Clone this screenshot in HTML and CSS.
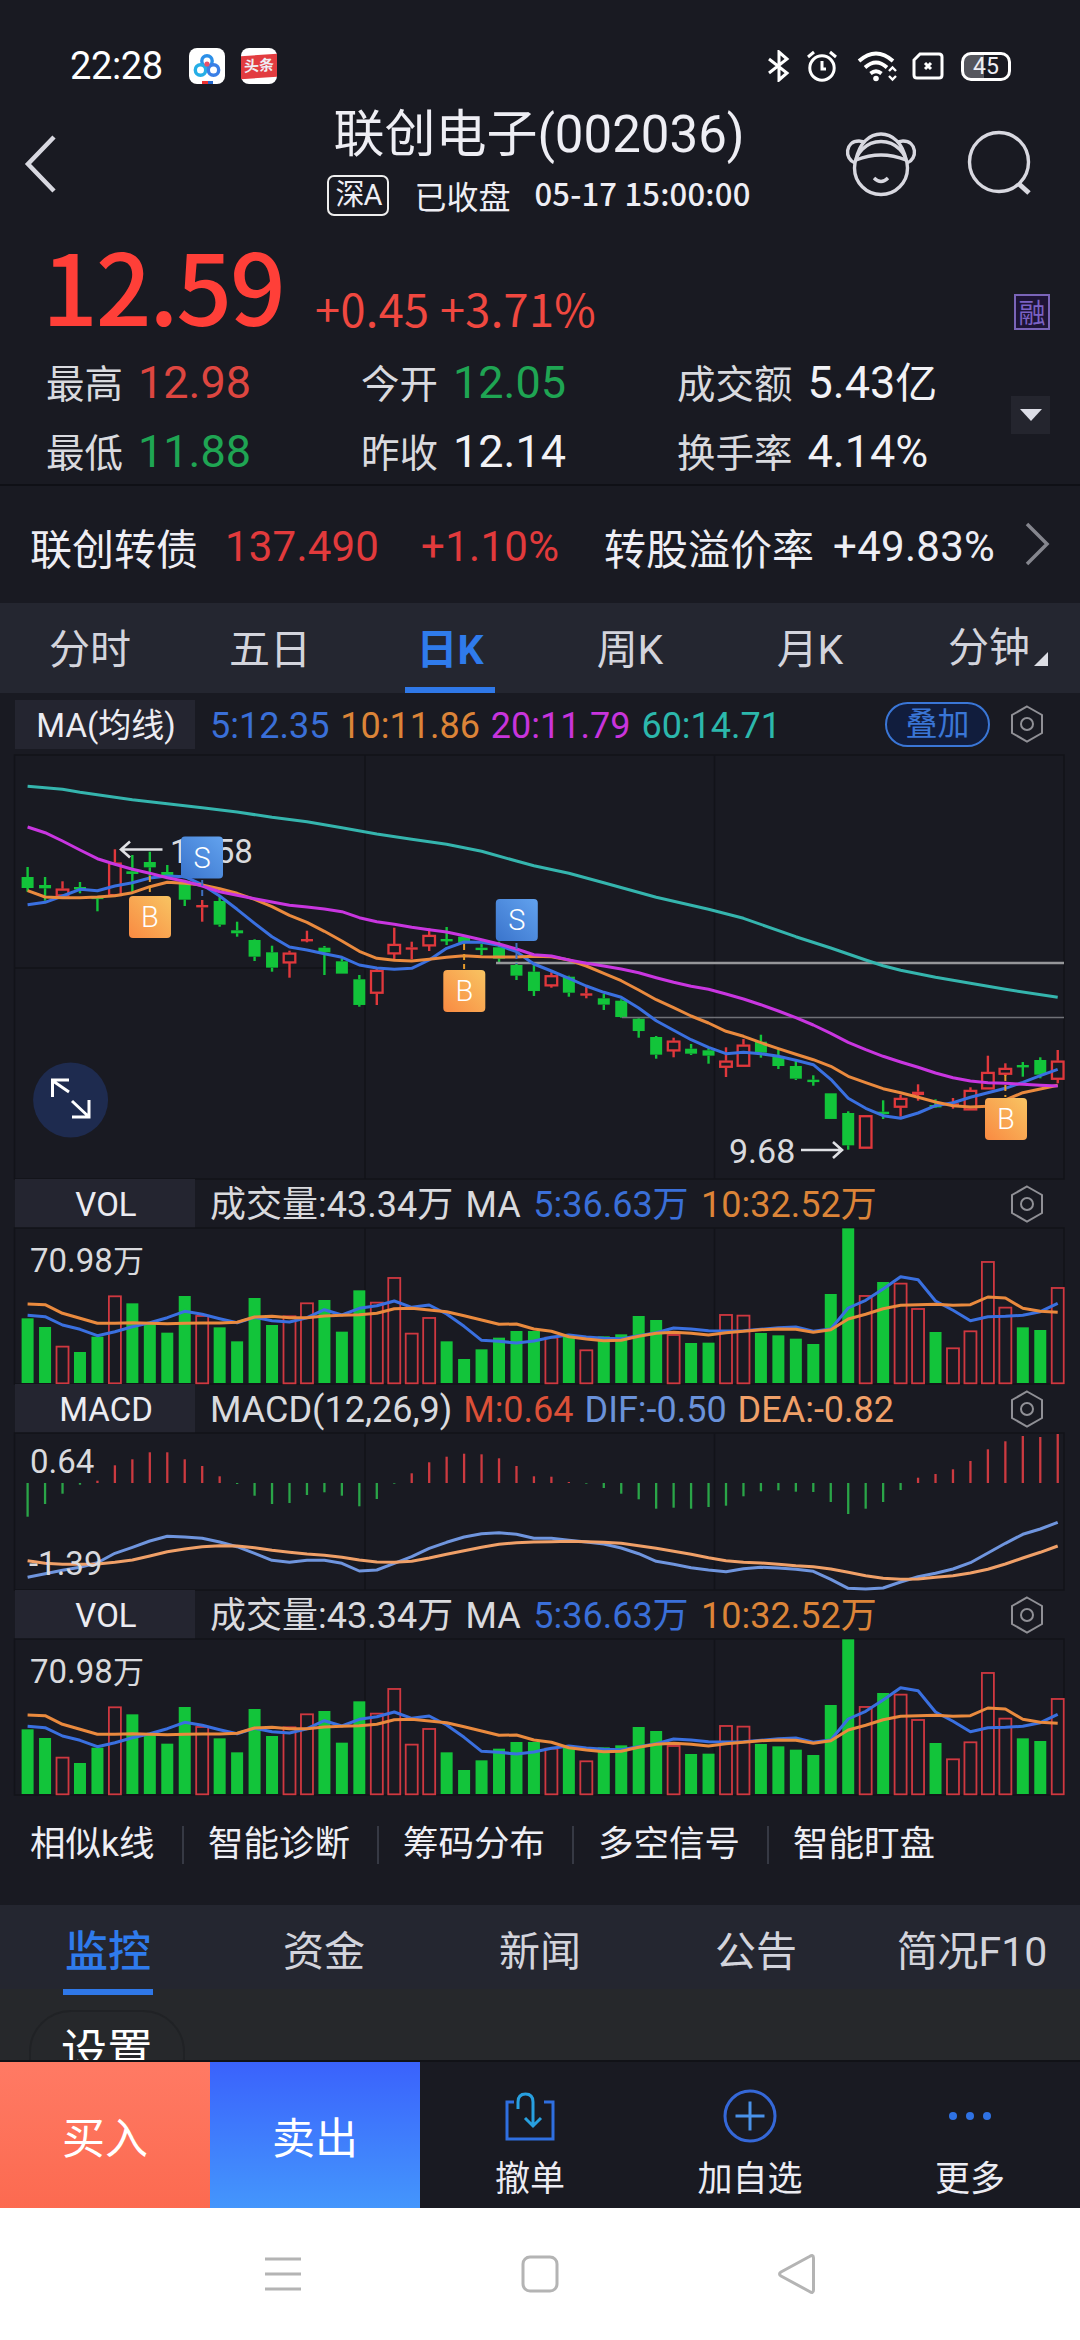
FILE: index.html
```html
<!DOCTYPE html>
<html lang="zh-CN">
<head>
<meta charset="utf-8">
<title>联创电子(002036)</title>
<link rel="stylesheet" href="styles.css">
</head>
<body>
<svg class="defs" width="0" height="0">
  <symbol id="hex" viewBox="0 0 34 38"><path d="M17 1.5 32 10v18L17 36.5 2 28V10Z"/><circle cx="17" cy="19" r="6"/></symbol>
</svg>

<div class="status">
  <span class="clock">22:28</span>
  <svg class="app" viewBox="0 0 36 36"><rect width="36" height="36" rx="8" fill="#fff"/><g fill="none" stroke-width="3.4"><circle cx="18" cy="13" r="5.2" stroke="#2b8fe8"/><circle cx="11.5" cy="22" r="5.2" stroke="#25aee6"/><circle cx="24.5" cy="22" r="5.2" stroke="#3a7fe6"/></g><circle cx="18" cy="16" r="2.6" fill="#e8506a"/><path d="M13 34.5h6" stroke="#e33" stroke-width="3"/><path d="M19 34.5h5" stroke="#26c" stroke-width="3"/></svg>
  <span class="app news"><b>头条</b></span>
  <div class="sys">
    <svg class="bt" width="24" height="32" viewBox="0 0 24 32"><path d="M2 9 20 23 12 30V2l8 7L2 23"/></svg>
    <svg class="alarm" width="32" height="32" viewBox="0 0 32 32"><circle cx="16" cy="18" r="12.2"/><path d="M16 11v8h4M2 7l6-5M30 7l-6-5"/></svg>
    <svg class="wifi" width="42" height="32" viewBox="0 0 42 32"><path d="M3 11q17-15 34 0M9 17.500q11-10 22 0M14.500 23.500q5.500-4.500 11 0" stroke-width="3.800"/><circle cx="20" cy="28.500" r="2.800" fill="#fff" stroke="none"/><path d="m33 21 3.500-3.500L40 21M33 26l3.500 3.500L40 26" stroke-width="2.400"/></svg>
    <svg class="sim" width="32" height="28" viewBox="0 0 32 28"><path d="M8 2h19q3 0 3 3v18q0 3-3 3H5q-3 0-3-3V8ZM13 11l6 6M19 11l-6 6" stroke-width="3"/></svg>
    <span class="battery">45</span>
  </div>
</div>

<header class="head">
  <svg class="back" width="34" height="60" viewBox="0 0 34 60"><path d="M31 3 5 30l26 27"/></svg>
  <div class="names">
    <h1>联创电子(002036)</h1>
    <p><span class="market">深A</span><span class="closed">已收盘</span><span class="when">05-17 15:00:00</span></p>
  </div>
  <svg class="bot" width="72" height="66" viewBox="0 0 72 66"><circle cx="36" cy="37" r="26.500"/><path d="M11 29Q36 19 61 29C58 12 47 3 36 3S14 12 11 29ZM10 32C-1 28 0 10 14 10q4 0 6 2M62 32c11-4 10-22-4-22q-4 0-6 2M29 47q7 7 14 0"/></svg>
  <svg class="search" width="66" height="66" viewBox="0 0 66 66"><circle cx="32" cy="32" r="29.500"/><path d="m52 54 10 9" stroke-width="5"/></svg>
</header>

<section class="quote">
  <div class="last"><strong>12.59</strong><span>+0.45 +3.71%</span><i class="margin">融</i></div>
  <div class="stats">
    <div>最高<b class="up">12.98</b></div><div>今开<b class="down">12.05</b></div><div>成交额<b>5.43<small>亿</small></b></div>
    <div>最低<b class="down">11.88</b></div><div>昨收<b>12.14</b></div><div>换手率<b>4.14%</b></div>
  </div>
  <div class="expand"><svg width="22" height="12" viewBox="0 0 22 12"><path d="M0 0h22L11 12Z" fill="#dcdde6"/></svg></div>
</section>

<div class="bond">
  <span class="bname">联创转债</span><span class="bprice">137.490</span><span class="bchg">+1.10%</span><span class="plabel">转股溢价率</span><span class="prem">+49.83%</span>
  <svg width="26" height="44" viewBox="0 0 26 44"><path d="m3 2 20 20L3 42"/></svg>
</div>

<nav class="tabs">
  <a>分时</a><a>五日</a><a class="on">日K</a><a>周K</a><a>月K</a><a class="menu">分钟<svg width="14" height="14"><path d="M14 0v14H0Z" fill="#dcdde4"/></svg></a>
</nav>

<main class="charts">
  <div class="panel-head first"><span class="kind">MA(均线)</span><p><span class="blue">5:12.35</span> <span class="orange">10:11.86</span> <span class="pink">20:11.79</span> <span class="teal">60:14.71</span></p><span class="overlay">叠加</span><svg class="gear"><use href="#hex"/></svg></div>
  <svg class="plot price" id="price" viewBox="0 15 1080 424"></svg>
  <div class="panel-head"><span class="kind">VOL</span><p class="vol">成交量:43.34万 MA <span class="blue">5:36.63万</span> <span class="orange">10:32.52万</span></p><svg class="gear"><use href="#hex"/></svg></div>
  <svg class="plot volume" viewBox="0 59 1080 157"></svg>
  <div class="panel-head"><span class="kind">MACD</span><p class="macd-t">MACD(12,26,9) <span class="mred">M:0.64</span> <span class="dif">DIF:-0.50</span> <span class="dea">DEA:-0.82</span></p><svg class="gear"><use href="#hex"/></svg></div>
  <svg class="plot macd" id="macd" viewBox="0 53 1080 157"></svg>
  <div class="panel-head"><span class="kind">VOL</span><p class="vol">成交量:43.34万 MA <span class="blue">5:36.63万</span> <span class="orange">10:32.52万</span></p><svg class="gear"><use href="#hex"/></svg></div>
  <svg class="plot volume" viewBox="0 59 1080 157"></svg>
</main>

<div class="tools"><span>相似k线</span><span>智能诊断</span><span>筹码分布</span><span>多空信号</span><span>智能盯盘</span></div>

<nav class="tabs info"><a class="on">监控</a><a>资金</a><a>新闻</a><a>公告</a><a>简况F10</a></nav>
<div class="settings"><span>设置</span></div>

<footer class="actions">
  <span class="buy">买入</span><span class="sell">卖出</span>
  <div class="act"><svg width="52" height="54" viewBox="0 0 52 54"><path d="M10 13H3v37h46V13h-9" stroke="#2f6fe0"/><path d="M14 20v-7q0-8 7.500-8T29 13v23M21 29l8 8 8-8" stroke="#28a0e0"/></svg>撤单</div>
  <div class="act"><svg width="54" height="54" viewBox="0 0 54 54"><circle cx="27" cy="27" r="25" stroke="#3568d8"/><path d="M27 12.500v29M12.500 27h29" stroke="#4a92ea"/></svg>加自选</div>
  <div class="act"><svg width="54" height="54" viewBox="0 0 54 54"><g fill="#2f72e4"><circle cx="10" cy="27" r="4"/><circle cx="27" cy="27" r="4"/><circle cx="44" cy="27" r="4"/></g></svg>更多</div>
</footer>

<div class="sysnav">
  <svg width="38" height="40" viewBox="0 0 38 40"><path d="M1 5h36M1 20h36M1 35h36"/></svg>
  <svg width="38" height="40" viewBox="0 0 38 40"><rect x="2" y="3" width="34" height="34" rx="7"/></svg>
  <svg width="38" height="40" viewBox="0 0 38 40"><path d="M31.500 2.500Q35.500 0 35.500 4v32q0 4-4 1.500L3 22q-3-2 0-4Z"/></svg>
</div>
<script src="charts.js"></script>
</body>
</html>
```
FILE: styles.css
```css
* { box-sizing: border-box; }
body { margin: 0; width: 1080px; height: 2340px; overflow: hidden; background: #191a22; color: #eeeef4; font-family: Roboto, "Noto Sans CJK SC", sans-serif; display: flex; flex-direction: column; }
body > * { flex: none; }
svg { display: block; fill: none; flex: none; }
h1, p { margin: 0; font-weight: 400; }
.defs { position: absolute; }

.status { height: 96px; padding: 36px 69px 0 70px; display: flex; align-items: center; }
.clock { font-size: 38px; line-height: 60px; width: 119px; white-space: nowrap; letter-spacing: -.4px; color: #fff; }
.app { width: 36px; height: 36px; margin-right: 16px; }
.news { background: #fff; border-radius: 8px; padding-top: 7px; }
.news b { display: block; background: #e23c40; font-size: 15px; line-height: 23px; text-align: center; transform: skewY(-4deg); }
.sys { margin-left: auto; display: flex; align-items: center; stroke: #fff; }
.bt { stroke-width: 3; margin-right: 15px; }
.alarm { stroke-width: 3; margin-right: 18px; }
.wifi { margin-right: 14px; }
.sim { margin-right: 17px; }
.battery { width: 50px; height: 29px; border: 3px solid #fff; border-radius: 10px; background: linear-gradient(90deg, #55565d 45%, #191a22 45%); font-size: 23px; line-height: 23px; text-align: center; }

.head { height: 134px; position: relative; display: flex; padding-left: 23px; stroke: #d8d8e0; }
.back { margin: 38px 0 0; stroke-width: 4.5; }
.names { width: 430px; margin: 9px 91px 0 267px; display: flex; flex-direction: column; gap: 9px; align-items: center; }
h1 { font-size: 51px; line-height: 60px; white-space: nowrap; }
.names p { display: flex; align-items: center; height: 42px; font-size: 32px; white-space: nowrap; }
.market { border: 2px solid #eee; border-radius: 7px; width: 62px; height: 41px; line-height: 37px; font-size: 29px; text-align: center; letter-spacing: -1px; }
.closed { margin: 0 24px 0 25px; }
.when { font-family: "Noto Sans CJK SC", sans-serif; font-size: 31px; font-weight: 500; line-height: 38px; margin-top: -4px; letter-spacing: .2px; }
.bot { margin: 35px 50px 0 0; stroke-width: 3.4; }
.search { margin-top: 34px; stroke-width: 3.4; }

.quote { height: 254px; position: relative; }
.last { display: flex; height: 123px; padding: 3px 30px 0 42px; font-family: "Noto Sans CJK SC", sans-serif; color: #ff3f38; line-height: 100px; white-space: nowrap; }
.last strong { font-size: 98px; font-weight: 500; width: 273px; letter-spacing: -2.200px; }
.last span { font-size: 45px; padding-top: 25px; color: #f04840; letter-spacing: .4px; }
.margin { margin: 61px 0 0 auto; width: 36px; height: 36px; border: 2px solid #7a64b8; color: #7b62c4; background: #1e1436; font: 27px/32px "Noto Sans CJK SC", sans-serif; text-align: center; }
.stats { display: grid; grid-template-columns: 315px 316px 340px; grid-auto-rows: 60px; row-gap: 9px; padding-left: 46px; }
.stats div { font-size: 38.500px; line-height: 60px; color: #d9dadf; white-space: nowrap; }
.stats b { font-weight: 400; font-size: 45px; margin-left: 15px; color: #f2f2f6; }
.stats small { font-size: 42px; }
.stats .up { color: #dd4640; }
.stats .down { color: #1fa553; }
.expand { position: absolute; right: 30px; top: 166px; width: 39px; height: 38px; background: #24252e; display: grid; place-items: center; }

.bond { height: 119px; border-top: 2px solid #0f1016; padding: 3px 0 0 30px; display: flex; align-items: center; font-size: 42px; white-space: nowrap; }
.bond svg { stroke: #85868e; stroke-width: 3.500; margin-top: -4px; }
.bname { width: 195px; }
.bprice, .bchg { color: #e23a3c; }
.bprice { width: 196px; letter-spacing: .2px; }
.bchg { width: 183px; letter-spacing: .3px; }
.plabel { width: 229px; }
.prem { width: 191px; letter-spacing: .3px; }

.tabs { height: 90px; background: #242630; display: grid; grid-template-columns: repeat(6, 180px); font-size: 41px; color: #d3d4dc; }
.tabs a { text-align: center; line-height: 94px; height: 90px; position: relative; white-space: nowrap; }
.tabs .on { color: #2f7bec; font-weight: 700; }
.tabs .on::after { content: ""; position: absolute; left: 45px; bottom: 0; width: 90px; height: 6px; background: #2f78e8; }
.tabs .menu { display: flex; align-items: center; padding-left: 48px; gap: 4px; }
.menu svg { margin-top: 22px; }
.info { height: 90px; grid-template-columns: repeat(5, 216px); background: linear-gradient(#242630 84px, #26282b 84px); }
.info .on { font-size: 43px; font-weight: 500; }
.info .on::after { left: 63px; }

.charts { display: flex; flex-direction: column; }
.panel-head { height: 49px; padding: 0 36px 0 15px; display: flex; align-items: center; font-size: 36px; color: #d9dade; white-space: nowrap; }
.first { height: 62px; }
.kind { width: 180px; height: 49px; line-height: 52px; background: #242530; font-size: 33px; text-align: center; color: #ececf2; margin-right: 15px; padding-left: 2px; }
.panel-head p { line-height: 49px; padding-top: 3px; word-spacing: 2px; }
.panel-head .vol { word-spacing: 3.500px; }
.first p { padding-top: 5px; }
.overlay { margin: 0 20px 0 auto; width: 105px; height: 45px; border: 2.500px solid #3a76d6; border-radius: 23px; background: #111d3d; color: #3a76d6; font-size: 32px; line-height: 41px; text-align: center; }
.gear { width: 34px; height: 38px; stroke: #909096; stroke-width: 2; margin-left: auto; }
.overlay + .gear { margin-left: 0; }
.blue { color: #3a6fd8; } .orange { color: #dc8438; } .pink { color: #c834dc; } .teal { color: #2cb8ac; }
.mred { color: #dc5038; } .dif { color: #6a92da; } .dea { color: #f0a068; }
.plot { width: 1080px; overflow: visible; }
.price { height: 424px; }
.volume { height: 157px; margin-bottom: -1px; }
.macd { height: 157px; }
.plot text { font-size: 33px; fill: #d9dade; }

.tools { height: 110px; padding: 31px 0 0 30px; display: flex; font-size: 35.500px; line-height: 36px; white-space: nowrap; }
.tools span { height: 38px; padding-right: 27px; margin-right: 24px; border-right: 2px solid #363944; }
.tools span:first-child { width: 154px; padding-right: 0; }
.tools span:last-child { border: 0; }

.settings { height: 67px; background: #26282b; overflow: hidden; padding: 15px 0 0 29px; border-bottom: 2px solid #111217; }
.settings span { display: block; width: 156px; height: 90px; border: 2px solid #202225; border-radius: 42px; text-align: center; font-size: 46px; line-height: 78px; color: #fff; }

.actions { height: 146px; display: grid; grid-template-columns: 210px 210px 220px 220px 220px; color: #fff; }
.buy, .sell { font-size: 43px; line-height: 154px; text-align: center; height: 146px; }
.buy { background: linear-gradient(#ff7a64, #fc6a50); }
.sell { background: linear-gradient(#3a62fc, #4496fc); }
.act { display: flex; flex-direction: column; align-items: center; padding-top: 27px; font-size: 35px; line-height: 44px; gap: 15px; color: #ececf2; stroke-width: 3; }
.sysnav { height: 132px; background: #fff; display: flex; justify-content: center; gap: 219px; padding-top: 46px; stroke: #b4b4b4; stroke-width: 3; }
```
FILE: charts.js
```javascript
const STEP = 17.46, LEFT = 27.6;
const RED = '#e0383c', GREEN = '#12c43a';
const x = i => LEFT + i * STEP;
const y = v => (v / 3).toFixed(1);

// Vertical values are in thirds of a pixel from each panel's origin.
const line = (pts, color, w = 3) =>
  `<polyline points="${pts.map((p, i) => Array.isArray(p) ? `${x(p[0]).toFixed(1)},${y(p[1])}` : `${x(i).toFixed(1)},${y(p)}`).join(' ')}" stroke="${color}" stroke-width="${w}" stroke-linejoin="round"/>`;

const grid = (top, bottom) =>
  `<path d="M14.500 ${top}H1064V${bottom}H14.500ZM365 ${top}V${bottom}M714.500 ${top}V${bottom}" stroke="#121319" stroke-width="1.500"/>`;

// side (1 = up), high, body top, body bottom, low
const candles = [
[0,381,411,444,455],[0,411,435,445,482],[1,424,446,468,468],[0,426,441,447,460],[0,470,470,475,514],[1,328,368,467,467],
[0,345,394,402,460],[0,335,366,382,410],[0,375,396,406,415],[0,420,428,479,498],[1,480,495,502,545],[0,470,483,554,560],
[0,545,571,580,590],[0,598,600,650,663],[0,617,637,683,695],[1,632,638,669,713],[1,572,597,602,607],[0,618,623,637,705],
[0,655,664,701,701],[0,705,718,795,800],[1,686,690,760,795],[1,563,612,642,660],[1,605,622,628,658],[1,565,585,618,633],
[0,561,597,603,615],[0,588,590,608,612],[0,612,623,628,645],[0,605,622,656,670],[0,665,675,707,720],[0,675,695,753,768],
[1,697,706,738,743],[0,707,710,758,770],[1,738,760,766,775],[0,762,775,794,810],[0,778,782,831,833],[0,833,836,873,893],
[0,888,891,944,956],[1,893,902,933,952],[0,912,926,941,945],[0,925,931,947,971],[1,922,962,982,1011],[1,897,914,979,979],
[0,884,905,938,953],[0,928,948,978,987],[0,962,978,1016,1020],[0,1006,1019,1026,1037],[0,1060,1060,1137,1137],[0,1114,1119,1216,1229],
[1,1126,1126,1225,1225],[0,1081,1115,1119,1137],[1,1064,1074,1102,1130],[1,1033,1055,1065,1082],[0,1078,1095,1101,1103],[1,1074,1090,1094,1106],
[1,1042,1050,1110,1110],[1,947,996,1047,1047],[1,970,984,1003,1008],[0,966,975,981,1010],[0,952,960,1004,1015],[1,930,962,1018,1030]];
const ma5 = [494,487,468,448,452,438,428,414,408,410,434,468,508,550,590,621,630,641,652,675,684,688,685,660,625,606,607,616,635,672,693,715,738,757,772,804,842,871,899,922,941,937,941,949,961,974,1018,1075,1105,1127,1135,1119,1097,1088,1072,1058,1045,1027,1007,988];
const ma10 = [452,471,473,473,471,467,458,440,427,430,435,446,460,478,500,526,547,574,603,634,655,661,663,658,652,647,650,651,651,649,650,660,678,700,722,750,779,803,828,849,874,889,908,926,943,959,979,1009,1028,1046,1058,1072,1086,1097,1101,1099,1080,1058,1047,1036];
const ma20 = [261,278,303,330,356,373,388,400,413,424,438,455,466,476,486,496,501,507,515,533,545,553,562,569,576,587,599,612,627,644,648,660,670,678,687,698,713,727,739,748,762,777,794,813,833,855,880,907,929,949,966,982,999,1013,1023,1028,1030,1033,1036,1038];
const ma60 = [[0,139],[1,143],[2,148],[3,157],[4,164],[6,179],[8,191],[10,203],[12,216],[14,232],[16,245],[18,263],[20,282],[22,298],[24,313],[25,323],[26,334],[28,363],[29,377],[31,400],[33,428],[36,472],[39,508],[41,535],[44,590],[46,624],[48,660],[49,677],[50,691],[52,712],[54,730],[56,748],[59,772]];

const candle = ([up, hi, top, bot, lo], i) => {
  const cx = x(i), color = up ? RED : GREEN;
  const wick = (a, b) => b > a ? `<path d="M${cx} ${y(a)}V${y(b)}" stroke="${color}" stroke-width="2.400"/>` : '';
  const h = Math.max(2.400, (bot - top) / 3);
  const body = up && h > 4
    ? `<rect x="${cx - 5.800}" y="${+y(top) + .9}" width="11.600" height="${h - 1.500}" stroke="${color}" stroke-width="2.300"/>`
    : `<rect x="${cx - 6}" y="${y(top)}" width="12" height="${h}" fill="${color}"/>`;
  return wick(hi, top) + body + wick(bot, lo);
};

const badge = (cx, top, label) =>
  `<rect x="${cx - 21}" y="${top}" width="42" height="42" rx="4" fill="url(#g${label})"/><text x="${cx}" y="${top + 31}" text-anchor="middle" style="font-size:29px;fill:#fff;font-weight:300">${label}</text>`;

document.getElementById('price').innerHTML =
  `<defs><linearGradient id="gB" x1="0" y1="1" x2="1" y2="0"><stop offset="0" stop-color="#f98a42"/><stop offset="1" stop-color="#f8c462"/></linearGradient>
  <linearGradient id="gS" x1="0" y1="1" x2="1" y2="0"><stop offset="0" stop-color="#3a74cc"/><stop offset="1" stop-color="#62a2ee"/></linearGradient></defs>` +
  grid(15, 439) + '<path d="M15 228H365" stroke="#121319" stroke-width="1.500"/>' +
  candles.map(candle).join('') +
  '<path d="M496 223H1064" stroke="#96979a" stroke-width="2.600"/><path d="M622 277.500H1064" stroke="#707177" stroke-width="1.600"/>' +
  line(ma5, '#3a70e0') + line(ma10, '#ea8a3e') + line(ma20, '#c936e0') + line(ma60, '#35b5ae') +
  `<g stroke="#e59a2c" stroke-width="2" stroke-dasharray="6 4"><path d="M${x(7)} 136V155"/><path d="M${x(25)} 204V229"/><path d="M${x(56)} 335V357"/></g>` +
  `<g stroke="#3f70c0" stroke-width="2" stroke-dasharray="6 4"><path d="M${x(10)} 140V160"/><path d="M${x(28)} 203V224"/></g>` +
  '<g stroke="#e0e1e5" stroke-width="2.600"><path d="M162.500 109.500H121M130 101.500l-9 8 9 8M801 410h41M833 402l9 8-9 8"/></g>' +
  '<text x="170" y="122.500">19.58</text><text x="729" y="423" style="font-size:34px">9.68</text>' +
  badge(202, 96.500, 'S') + badge(150, 156, 'B') + badge(516.800, 159, 'S') + badge(464.300, 230, 'B') + badge(1006, 358, 'B') +
  '<circle cx="70.600" cy="360" r="37.500" fill="#1e2b4f"/><path d="M69 353 53 342M52.500 358V341H69M72 362l17 16M72 378h17V361" transform="translate(0 -1)" stroke="#fff" stroke-width="3"/>';

const volumes = [448,474,-532,549,503,-381,403,463,491,381,-440,475,517,387,468,-441,-402,393,488,364,-400,-326,-493,-446,517,570,541,506,486,486,-505,500,-543,502,496,441,453,-497,522,521,-437,-439,492,499,509,525,375,178,-380,339,-343,-419,489,-537,-486,-278,-415,475,483,-356];
const v5 = [439,443,468,481,500,488,473,461,446,427,436,449,461,445,455,459,446,422,438,418,410,396,415,408,435,472,514,517,522,516,505,498,504,508,509,500,491,477,480,485,486,485,481,476,474,487,480,417,394,360,323,332,396,424,455,443,442,439,428,403];
const v10 = [405,407,433,448,463,463,461,463,464,463,462,462,460,444,442,446,446,441,439,437,433,419,418,423,428,440,453,466,465,480,487,503,510,515,514,502,493,490,493,498,491,487,482,480,481,490,482,450,436,419,409,407,406,409,407,384,387,418,427,430];
const volumeSvg = grid(59, 215) + volumes.map((v, i) => {
  const cx = x(i), t = Math.abs(v) / 3;
  return v < 0
    ? `<rect x="${cx - 6}" y="${t + .3}" width="12" height="${214 - t}" stroke="#cf3840" stroke-width="1.800"/>`
    : `<rect x="${cx - 6}" y="${t}" width="12" height="${214 - t}" fill="${GREEN}"/>`;
}).join('') + line(v5, '#3a70e0') + line(v10, '#ea8a3e') + '<text x="30" y="102.500">70.98<tspan font-size="31">万</tspan></text>';
document.querySelectorAll('.volume').forEach(s => { s.innerHTML = volumeSvg; });

const hist = [410,372,341,314,302,256,238,217,217,238,258,289,312,347,372,369,345,337,347,379,357,311,280,247,230,221,223,235,258,289,290,306,311,324,341,358,386,383,386,381,377,349,334,331,335,336,366,402,386,366,330,293,282,268,243,208,184,168,171,162];
const dif = [592,581,571,562,548,520,502,483,469,471,475,486,500,520,541,547,541,541,550,573,570,550,530,505,487,471,461,458,463,475,475,481,486,492,504,521,544,553,563,570,575,566,562,564,568,574,598,625,627,624,606,590,580,567,548,519,490,463,447,427];
const dea = [542,550,553,553,552,547,540,528,515,507,500,497,498,503,511,517,522,526,532,540,546,547,544,534,523,512,502,493,488,486,485,484,485,487,490,497,505,514,523,533,542,547,549,553,557,560,567,577,587,595,598,597,592,587,579,568,552,534,517,498];
document.getElementById('macd').innerHTML = grid(53, 210) +
  hist.map((v, i) => `<path d="M${x(i)} ${y(309)}V${y(v)}" stroke="${v > 309 ? '#2aa548' : '#cc3a40'}" stroke-width="2.300"/>`).join('') +
  line(dif, '#6f95de') + line(dea, '#f0a068') + '<text x="30" y="93">0.64</text><text x="29" y="195">-1.39</text>';
```
